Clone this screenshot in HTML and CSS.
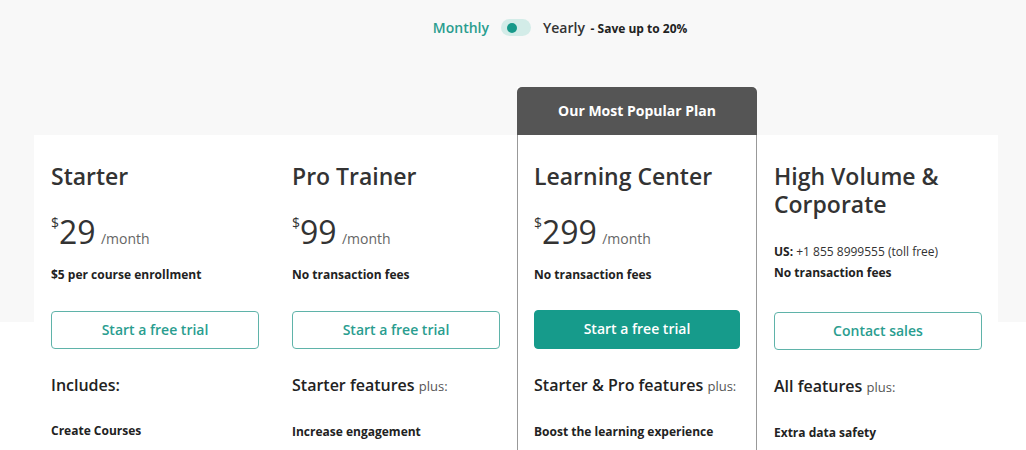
FILE: index.html
```html
<!DOCTYPE html>
<html lang="en">
<head>
    <meta charset="UTF-8">
    <meta name="viewport" content="width=device-width, initial-scale=1.0">
    <title>Pricing</title>
    <link rel="stylesheet" href="styles.css">
</head>
<body>
    <div class="billing">
        <span class="billing-monthly">Monthly</span>
        <span class="switch"><span class="knob"></span></span>
        <span class="billing-yearly">Yearly <small>- Save up to 20%</small></span>
    </div>

    <div class="plans">
        <div class="plan">
            <div class="plan-body">
                <div class="head">
                    <h2>Starter</h2>
                    <div class="price"><sup>$</sup>29 <span>/month</span></div>
                    <p class="note">$5 per course enrollment</p>
                </div>
                <a class="btn" href="#">Start a free trial</a>
                <h3>Includes:</h3>
                <p class="feature">Create Courses</p>
            </div>
        </div>

        <div class="plan">
            <div class="plan-body">
                <div class="head">
                    <h2>Pro Trainer</h2>
                    <div class="price"><sup>$</sup>99 <span>/month</span></div>
                    <p class="note">No transaction fees</p>
                </div>
                <a class="btn" href="#">Start a free trial</a>
                <h3>Starter features <span>plus:</span></h3>
                <p class="feature">Increase engagement</p>
            </div>
        </div>

        <div class="plan featured">
            <div class="badge">Our Most Popular Plan</div>
            <div class="plan-body">
                <div class="head">
                    <h2>Learning Center</h2>
                    <div class="price"><sup>$</sup>299 <span>/month</span></div>
                    <p class="note">No transaction fees</p>
                </div>
                <a class="btn btn-solid" href="#">Start a free trial</a>
                <h3>Starter &amp; Pro features <span>plus:</span></h3>
                <p class="feature">Boost the learning experience</p>
            </div>
        </div>

        <div class="plan">
            <div class="plan-body">
                <div class="head">
                    <h2>High Volume &amp; Corporate</h2>
                    <p class="contact"><b>US:</b> +1 855 8999555 (toll free)</p>
                    <p class="contact"><b>No transaction fees</b></p>
                </div>
                <a class="btn btn-contact" href="#">Contact sales</a>
                <h3>All features <span>plus:</span></h3>
                <p class="feature feature-low">Extra data safety</p>
            </div>
        </div>
    </div>
</body>
</html>
```

FILE: styles.css
```css
body {
    margin: 0;
    font-family: "Open Sans", Lato, sans-serif;
    color: #333;
    background: linear-gradient(#f8f8f8 0, #f8f8f8 322px, #fff 322px);
    height: 450px;
    overflow: hidden;
}
.billing {
    display: grid;
    grid-template-columns: 1fr auto 1fr;
    align-items: center;
    column-gap: 12px;
    padding: 18px 0 0 6px;
    height: 17px;
}
.billing-monthly {
    justify-self: end;
    color: #2a9d8f;
    font-weight: 600;
    font-size: 14px;
}
.billing-yearly {
    color: #333;
    font-weight: 600;
    font-size: 14px;
}
.billing-yearly small {
    font-size: 12px;
    font-weight: 700;
    color: #222;
    margin-left: 2px;
}
.switch {
    display: flex;
    align-items: center;
    width: 30px;
    height: 17px;
    border-radius: 9px;
    background: #d3ece8;
    box-sizing: border-box;
    padding-left: 6px;
}
.knob {
    width: 10px;
    height: 10px;
    border-radius: 50%;
    background: #17998a;
}
.plans {
    display: grid;
    grid-template-columns: 241px 242px 240px 241px;
    width: 964px;
    margin: 52px 0 0 34px;
}
.plan {
    margin-top: 48px;
    background: #fff;
}
.plan.featured {
    margin-top: 0;
}
.badge {
    height: 48px;
    line-height: 48px;
    background: #555;
    color: #fff;
    font-size: 14px;
    font-weight: 700;
    text-align: center;
    border-radius: 5px 5px 0 0;
}
.featured .plan-body {
    border-left: 1px solid #999;
    border-right: 1px solid #999;
    padding: 0 16px;
    height: 315px;
}
.plan-body {
    padding: 0 17px;
}
.head {
    height: 176px;
    box-sizing: border-box;
    padding-top: 27px;
}
h2 {
    margin: 0;
    font-size: 23px;
    line-height: 28px;
    font-weight: 600;
    color: #333;
}
.price {
    margin-top: 22px;
    font-size: 32px;
    line-height: 40px;
    color: #333;
}
.price sup {
    font-size: 14px;
    vertical-align: top;
    position: relative;
    top: -9px;
}
.price span {
    font-size: 14px;
    color: #666;
    margin-left: -3px;
}
.note {
    margin: 8px 0 0;
    font-size: 12px;
    line-height: 16px;
    font-weight: 700;
    color: #222;
}
.contact {
    margin: 1px 0 0;
    font-size: 12px;
    line-height: 20px;
    color: #333;
}
.contact:first-of-type {
    margin-top: 24px;
}
.contact b {
    color: #222;
}
.btn {
    display: block;
    height: 38px;
    line-height: 36px;
    box-sizing: border-box;
    border: 1px solid #5fb3a9;
    border-radius: 4px;
    text-align: center;
    text-decoration: none;
    color: #2a9d8f;
    font-size: 14px;
    font-weight: 600;
    width: 208px;
}
.btn-solid {
    background: #169b8b;
    border-color: #169b8b;
    color: #fff;
    width: 206px;
    height: 39px;
    margin-top: -1px;
}
.btn-contact {
    margin-top: 1px;
}
h3 {
    margin: 24px 0 0;
    font-size: 16px;
    line-height: 24px;
    font-weight: 600;
    color: #222;
}
h3 span {
    font-size: 13px;
    font-weight: 400;
    color: #555;
}
.feature {
    margin: 25px 0 0;
    font-size: 12px;
    line-height: 18px;
    font-weight: 700;
    color: #222;
}
.feature-low {
    margin-top: 25px;
}
```
